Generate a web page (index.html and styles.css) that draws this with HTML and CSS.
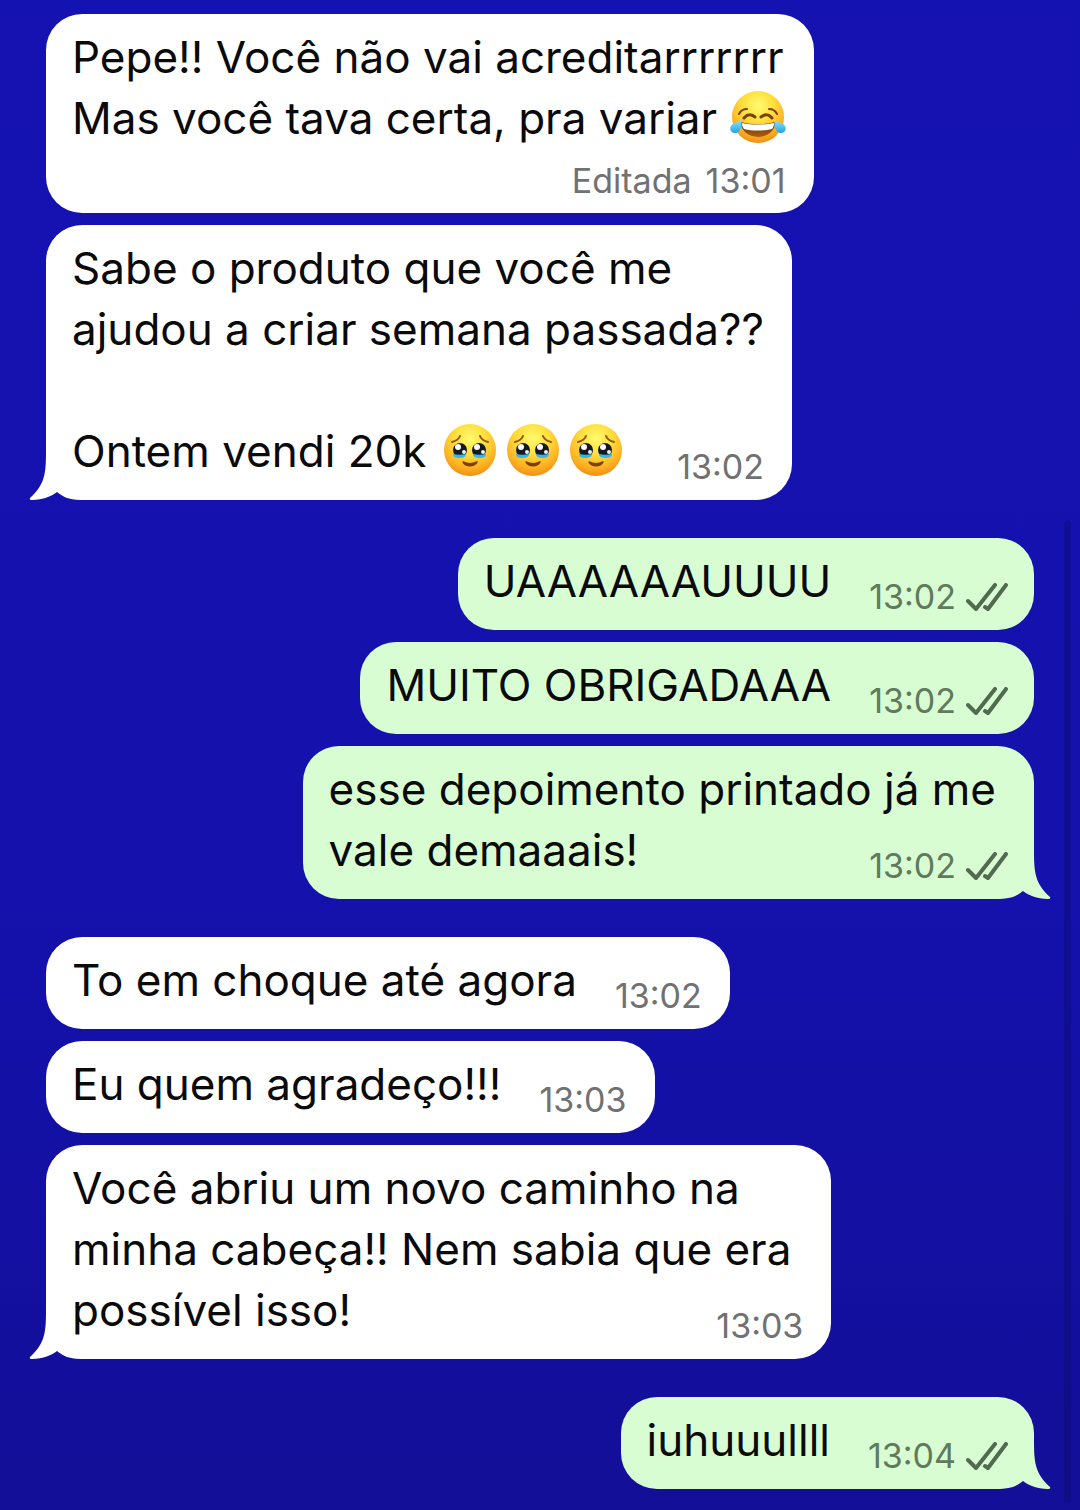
FILE: index.html
```html
<!DOCTYPE html>
<html lang="pt-BR">
	<head>
		<meta charset="utf-8">
		<meta name="viewport" content="width=device-width, initial-scale=1">
		<title>Conversa</title>
		<link rel="stylesheet" href="styles.css">
	</head>
	<body>
		<svg class="defs" aria-hidden="true">
			<defs>
				<radialGradient id="skin" cx="50%" cy="28%" r="75%">
					<stop offset="0" stop-color="#fffb70"/>
					<stop offset="0.4" stop-color="#ffdf3c"/>
					<stop offset="0.75" stop-color="#fdb022"/>
					<stop offset="1" stop-color="#ee8a10"/>
				</radialGradient>
				<linearGradient id="tear" x1="0" y1="0" x2="0" y2="1">
					<stop offset="0" stop-color="#8ce4fb"/>
					<stop offset="1" stop-color="#20a4e6"/>
				</linearGradient>
				<linearGradient id="mouth" x1="0" y1="0" x2="0" y2="1">
					<stop offset="0" stop-color="#6b3108"/>
					<stop offset="1" stop-color="#a85d12"/>
				</linearGradient>
				<symbol id="joy" viewBox="0 0 56 52">
					<circle cx="28" cy="26" r="26" fill="url(#skin)"/>
					<path d="M9 23c1-2 4-5 8-5M47 23c-1-2-4-5-8-5" fill="none" stroke="#7b410b" stroke-width="2" stroke-linecap="round"/>
					<path d="M14 27c3-4 7-4 11-1M31 26c4-3 8-3 11 1" fill="none" stroke="#7b410b" stroke-width="3" stroke-linecap="round"/>
					<path d="M11 31c10 3 24 3 34 0 1 8-7 15-17 15S10 39 11 31z" fill="url(#mouth)"/>
					<path d="M12 32c10 2 22 2 32 0 0 3-1 5-2 6-8 2-20 2-28 0-1-1-2-3-2-6z" fill="#fff"/>
					<path d="M11 29c2 6-1 13-6 13-4 0-6-4-4-7 2-4 7-3 10-6z" fill="url(#tear)"/>
					<path d="M45 29c-2 6 1 13 6 13 4 0 6-4 4-7-2-4-7-3-10-6z" fill="url(#tear)"/>
				</symbol>
				<symbol id="moved" viewBox="0 0 52 52">
					<circle cx="26" cy="26" r="26" fill="url(#skin)"/>
					<path d="M8 18c4-1 7-3 8-6M44 18c-4-1-7-3-8-6" fill="none" stroke="#94560c" stroke-width="2" stroke-linecap="round"/>
					<circle cx="16" cy="26" r="7" fill="#16191d"/>
					<circle cx="35" cy="26" r="7" fill="#16191d"/>
					<path d="M9 30c4 1 9 1 13 0 0 3-3 4-7 4-3 0-6-1-6-4zM29 30c4 1 9 1 13 0 0 3-3 4-6 4-4 0-7-1-7-4z" fill="#35b6ec"/>
					<circle cx="14" cy="23" r="3" fill="#fff"/>
					<circle cx="33" cy="23" r="3" fill="#fff"/>
					<circle cx="20" cy="28" r="2" fill="#e8f1f5"/>
					<circle cx="39" cy="28" r="2" fill="#e8f1f5"/>
					<path d="M19 38c3 5 11 5 14 0-4 2-10 2-14 0z" fill="#7b410b" stroke="#7b410b" stroke-width="1.5" stroke-linejoin="round"/>
				</symbol>
				<symbol id="checks" viewBox="0 0 42 28">
					<path d="M2 18l8 8L29 2M19 24l3 2L40 2" fill="none" stroke="currentColor" stroke-width="4" stroke-linecap="round" stroke-linejoin="round"/>
				</symbol>
				<symbol id="tail" viewBox="0 0 54 50">
					<path d="M17 0C17 24 16 34 1 48Q0 50 3 50C14 50 23 46 28 42C34 47 40 50 54 50V0z" fill="currentColor"/>
				</symbol>
			</defs>
		</svg>

		<main class="chat">
			<section class="group received">
				<article class="bubble">
					<p>Pepe!! Você não vai acreditarrrrrrr</p>
					<p>Mas você tava certa, pra variar <svg class="emoji joy" role="img" aria-label="😂"><use href="#joy"/></svg></p>
					<div class="meta below"><span>Editada</span> <time>13:01</time></div>
				</article>
				<article class="bubble last">
					<p>Sabe o produto que você me</p>
					<p>ajudou a criar semana passada??</p>
					<p><br></p>
					<div class="row">
						<p>Ontem vendi 20k <svg class="emoji" role="img" aria-label="🥹"><use href="#moved"/></svg><svg class="emoji" role="img" aria-label="🥹"><use href="#moved"/></svg><svg class="emoji" role="img" aria-label="🥹"><use href="#moved"/></svg></p>
						<div class="meta"><time>13:02</time></div>
					</div>
					<svg class="tail"><use href="#tail"/></svg>
				</article>
			</section>

			<section class="group sent">
				<article class="bubble">
					<div class="row">
						<p>UAAAAAAUUUU</p>
						<div class="meta"><time>13:02</time><svg class="checks"><use href="#checks"/></svg></div>
					</div>
				</article>
				<article class="bubble">
					<div class="row">
						<p>MUITO OBRIGADAAA</p>
						<div class="meta"><time>13:02</time><svg class="checks"><use href="#checks"/></svg></div>
					</div>
				</article>
				<article class="bubble wrapped last">
					<p>esse depoimento printado já me</p>
					<div class="row">
						<p>vale demaaais!</p>
						<div class="meta"><time>13:02</time><svg class="checks"><use href="#checks"/></svg></div>
					</div>
					<svg class="tail"><use href="#tail"/></svg>
				</article>
			</section>

			<section class="group received">
				<article class="bubble">
					<div class="row">
						<p>To em choque até agora</p>
						<div class="meta"><time>13:02</time></div>
					</div>
				</article>
				<article class="bubble">
					<div class="row">
						<p>Eu quem agradeço!!!</p>
						<div class="meta"><time>13:03</time></div>
					</div>
				</article>
				<article class="bubble wrapped last">
					<p>Você abriu um novo caminho na</p>
					<p>minha cabeça!! Nem sabia que era</p>
					<div class="row">
						<p>possível isso!</p>
						<div class="meta"><time>13:03</time></div>
					</div>
					<svg class="tail"><use href="#tail"/></svg>
				</article>
			</section>

			<section class="group sent">
				<article class="bubble last">
					<div class="row">
						<p>iuhuuullll</p>
						<div class="meta"><time>13:04</time><svg class="checks"><use href="#checks"/></svg></div>
					</div>
					<svg class="tail"><use href="#tail"/></svg>
				</article>
			</section>
		</main>
		<div class="scroll-thumb"></div>
	</body>
</html>
```
FILE: styles.css
```css
* {
	box-sizing: border-box;
}
html {
	min-height: 100%;
	background: linear-gradient(#1512b2, #1411ac 60%, #130f98);
}
body {
	margin: 0;
	font-family: Inter, "Liberation Sans", sans-serif;
	font-size: 44px;
	line-height: 61px;
	color: #0a0a0a;
}
p {
	margin: 0;
	white-space: nowrap;
}
.defs {
	position: absolute;
	width: 0;
	height: 0;
}
.chat {
	display: flex;
	flex-direction: column;
	gap: 38px;
	padding: 14px 46px 21px;
}
.group {
	display: flex;
	flex-direction: column;
	align-items: flex-start;
	gap: 12px;
}
.sent {
	align-items: flex-end;
}
.bubble {
	position: relative;
	isolation: isolate;
	padding: 13px 28px 18px 26px;
	border-radius: 36px;
	background: #fff;
}
.sent .bubble {
	padding-right: 26px;
	background: #d9fdd3;
}
.wrapped p {
	padding-right: 12px;
}
.row {
	display: flex;
	justify-content: space-between;
	align-items: flex-end;
	gap: 38px;
}
.meta {
	display: flex;
	justify-content: flex-end;
	align-items: center;
	gap: 10px;
	height: 46px;
	margin-bottom: -8px;
	font-size: 34px;
	line-height: 46px;
	color: #717171;
}
.sent .meta {
	color: #5f7a5c;
}
.below {
	gap: 14px;
	height: 64px;
	margin-bottom: -18px;
}
.checks {
	width: 42px;
	height: 28px;
	color: #526b50;
}
.emoji {
	width: 52px;
	height: 52px;
	margin-left: 5px;
	margin-right: 6px;
	vertical-align: -9px;
}
.joy {
	width: 56px;
	margin: 0;
}

/* the tail sits over the rounded corner of the last bubble in a group */
.tail {
	position: absolute;
	z-index: -1;
	left: -17px;
	bottom: 0;
	width: 54px;
	height: 50px;
	color: #fff;
}
.sent .tail {
	left: auto;
	right: -17px;
	transform: scaleX(-1);
	color: #d9fdd3;
}

/* scroll bar */
.scroll-thumb {
	position: fixed;
	top: 520px;
	right: 9px;
	bottom: 8px;
	width: 7px;
	border-radius: 4px;
	background: rgba(10, 10, 90, 0.3);
}
```
